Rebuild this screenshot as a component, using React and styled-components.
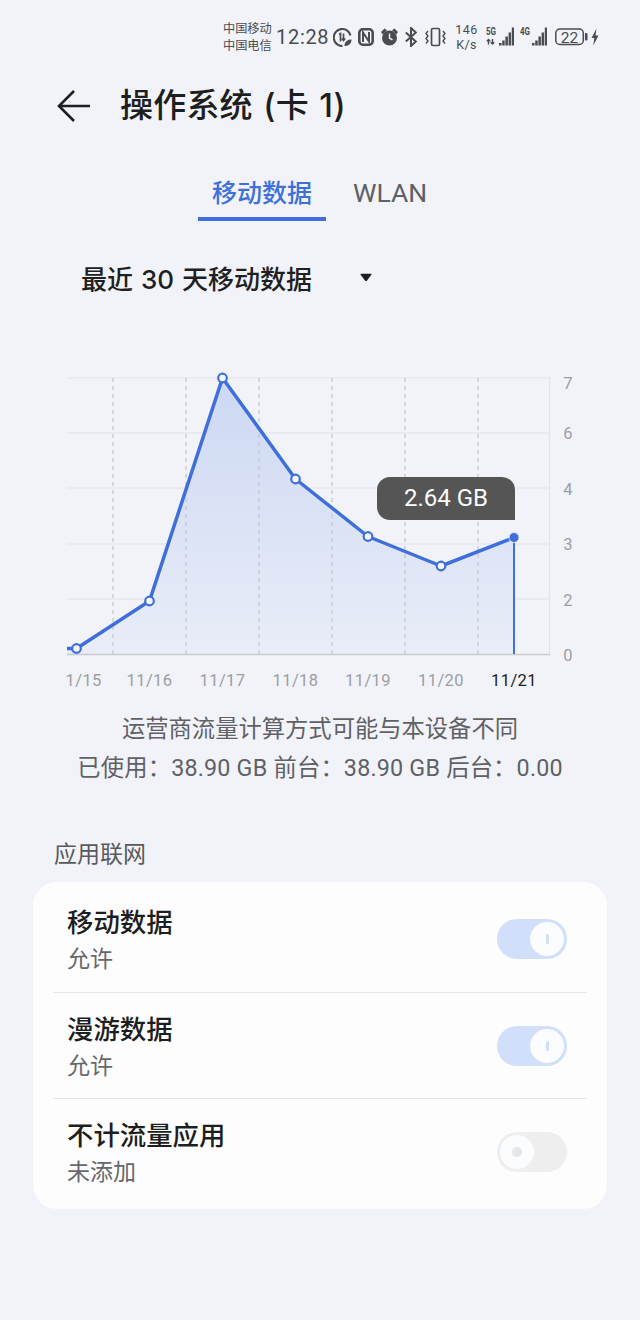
import styled, { createGlobalStyle } from "styled-components";

const CJK = `Inter, "Noto Sans CJK SC", sans-serif`;
const LATIN_FIRST = `Roboto, "Noto Sans CJK SC", sans-serif`;
const INK = "#4a4c50";

const GlobalStyle = createGlobalStyle`
  html, body {
    margin: 0;
    padding: 0;
    background: #f1f3f8;
  }
  body {
    font-family: ${CJK};
  }
`;

const points = [
  [76.5, 648.5],
  [149.5, 601],
  [222.5, 378],
  [295.5, 479],
  [368, 536.5],
  [441, 566],
  [514, 537.5],
];
const gridY = [378, 433, 488, 544, 599];
const gridX = [113, 186, 259, 332, 405, 478];
const axisLabels = [
  ["7", 383],
  ["6", 433],
  ["4", 489],
  ["3", 544],
  ["2", 600],
  ["0", 655],
];
const dayLabels = ["11/16", "11/17", "11/18", "11/19", "11/20", "11/21"];

const rows = [
  { title: "移动数据", sub: "允许", on: true, height: 111, pad: 22 },
  { title: "漫游数据", sub: "允许", on: true, height: 106, pad: 18 },
  { title: "不计流量应用", sub: "未添加", on: false, height: 110, pad: 18 },
];

const Page = styled.div`
  width: 640px;
  height: 1320px;
  overflow: hidden;
  background: #f1f3f8;
`;

const StatusBar = styled.div`
  height: 74px;
  box-sizing: border-box;
  padding: 0 40px 0 223px;
  display: flex;
  align-items: center;
  color: ${INK};
`;

const Carrier = styled.div`
  width: 53px;
  font-size: 12.2px;
  line-height: 17.5px;
`;

const Time = styled.div`
  width: 57px;
  font-family: Roboto, sans-serif;
  font-size: 20px;
  letter-spacing: 0.7px;
`;

const Speed = styled.div`
  width: 23px;
  margin: 0 8px 0 9px;
  font-family: Roboto, sans-serif;
  font-size: 12.5px;
  line-height: 15px;
  letter-spacing: 0.4px;
  text-align: center;
`;

const StatusIcon = styled.svg`
  flex: none;
  margin-right: ${(p) => p.$gap || 0}px;
  display: block;
`;

const Header = styled.div`
  height: 64px;
  display: flex;
  align-items: center;
  gap: 29px;
  padding-left: 57px;
`;

const Title = styled.h1`
  margin: 0;
  padding-bottom: 6px;
  font-size: 33px;
  font-weight: 500;
  word-spacing: 1.5px;
  letter-spacing: 0.2px;
  color: #1d1e20;
  white-space: nowrap;
`;

const Tabs = styled.div`
  margin-top: 21px;
  padding-left: 198px;
  display: flex;
  gap: 27px;
`;

const Tab = styled.div`
  box-sizing: border-box;
  height: 62px;
  padding: 16px ${(p) => (p.$active ? 14 : 0)}px 0;
  width: ${(p) => (p.$active ? "128px" : "auto")};
  font-size: ${(p) => (p.$active ? 25 : 26.5)}px;
  line-height: 36px;
  font-weight: ${(p) => (p.$active ? 500 : 400)};
  color: ${(p) => (p.$active ? "#3f6fdb" : "#5e6064")};
  border-bottom: ${(p) => (p.$active ? "4px solid #3f6fdb" : "none")};
  white-space: nowrap;
  font-family: ${(p) => (p.$active ? CJK : "Roboto, sans-serif")};
`;

const RangeRow = styled.div`
  margin-top: 36px;
  padding-left: 81px;
  display: flex;
  align-items: center;
  height: 40px;
`;

const RangeLabel = styled.div`
  width: 279px;
  font-size: 26px;
  font-weight: 500;
  word-spacing: 1px;
  color: #1f2022;
  white-space: nowrap;
`;

const ChartWrap = styled.div`
  position: relative;
  margin: 63px 0 0 65px;
  width: 575px;
  height: 330px;
`;

const ChartSvg = styled.svg`
  display: block;
`;

const Bubble = styled.div`
  position: absolute;
  left: 312px;
  top: 117px;
  width: 138px;
  height: 43px;
  background: #555555;
  border-radius: 13px 13px 0 13px;
  color: #fbfbfb;
  font-family: Roboto, sans-serif;
  font-size: 24px;
  line-height: 43px;
  text-align: center;
`;

const Note = styled.div`
  margin-top: ${(p) => p.$top || 0}px;
  text-align: center;
  font-family: ${LATIN_FIRST};
  font-size: 23.3px;
  line-height: 38px;
  letter-spacing: ${(p) => p.$spread || 0}px;
  color: #5f6165;
  white-space: nowrap;
`;

const SectionLabel = styled.div`
  margin-top: 49px;
  padding-left: 54px;
  font-size: 23px;
  line-height: 36px;
  color: #585a5e;
`;

const Card = styled.div`
  margin: 10px 33px 0;
  background: #fdfdfe;
  border-radius: 24px;
  padding: 0 20px;
`;

const Row = styled.div`
  box-sizing: border-box;
  height: ${(p) => p.$height}px;
  padding: ${(p) => p.$pad}px 20px 0 14px;
  display: flex;
  justify-content: space-between;
  border-bottom: ${(p) => (p.$last ? "none" : "1px solid #e6e7ea")};
`;

const RowTitle = styled.div`
  font-size: 26.4px;
  line-height: 36px;
  font-weight: 500;
  color: #1d1e20;
`;

const RowSub = styled.div`
  margin-top: 1px;
  font-size: 23px;
  line-height: 36px;
  color: #66686c;
`;

const Toggle = styled.div`
  position: relative;
  margin-top: 15px;
  width: 70px;
  height: 40px;
  border-radius: 20px;
  background: ${(p) => (p.$on ? "#d2dffa" : "#eeeeee")};
`;

const Knob = styled.div`
  position: absolute;
  top: 3px;
  left: ${(p) => (p.$on ? "33px" : "3px")};
  width: 34px;
  height: 34px;
  border-radius: 50%;
  background: #fbfcfe;
  display: flex;
  align-items: center;
  justify-content: center;
  &::after {
    content: "";
    display: block;
    width: ${(p) => (p.$on ? "3px" : "10px")};
    height: 10px;
    border-radius: ${(p) => (p.$on ? "2px" : "50%")};
    background: ${(p) => (p.$on ? "#d2dffa" : "#e6e6e6")};
  }
`;

const BackIcon = () => (
  <svg width="34" height="34" viewBox="0 0 34 34" fill="none" stroke="#1d1e20" strokeWidth="2.6">
    <path d="M33 17H2.5M17 2L2 17l15 15" />
  </svg>
);

const Caret = () => (
  <svg width="12" height="9" viewBox="0 0 14 10" fill="#1d1e20">
    <path d="M1.5 0.5h11q1.5 0 .8 1.4L8 8.8q-1 1-2 0L.7 1.9Q0 .5 1.5.5z" />
  </svg>
);

const NetIcon = ({ label, arrows, width }) => (
  <StatusIcon $gap={arrows ? 6 : 8} width={width} height="20" viewBox={`0 0 ${width} 20`}>
    <text
      x="0"
      y="8"
      fontFamily="Roboto, sans-serif"
      fontSize="10"
      fontWeight="700"
      textLength="10"
      lengthAdjust="spacingAndGlyphs"
      fill={INK}
    >
      {label}
    </text>
    {arrows && (
      <path d="M2.500 17.500v-5M.8 14.200l1.700-1.700 1.700 1.700M6.500 12v5M4.800 15.300l1.700 1.700 1.700-1.700" fill="none" stroke={INK} strokeWidth="1.400" />
    )}
    <g fill={INK}>
      {[2.5, 5, 9, 13, 18].map((h, i) => (
        <rect key={i} x={width - 15 + i * 3.2} y={18.5 - h} width="2.500" height={h} />
      ))}
    </g>
  </StatusIcon>
);

const StatusIcons = () => (
  <>
    <StatusIcon $gap={6} width="19" height="19" viewBox="0 0 19 19" fill="none" stroke={INK} strokeWidth="2.100">
      <path d="M17.500 7.500A8.500 8.500 0 1 0 9.500 18" />
      <path d="M6 6.500l1.500-1v8M10.500 5.500v7M8.800 10.500l1.700 2 1.700-2" strokeWidth="1.700" />
      <path d="M11.500 18c0-4 2.500-6.500 7-6.500 0 4-2.500 6.500-7 6.500z" fill={INK} stroke="none" />
    </StatusIcon>
    <StatusIcon $gap={7} width="16" height="18" viewBox="0 0 16 18" fill="none" stroke={INK}>
      <rect x="1.300" y="1.300" width="13.400" height="15.400" rx="3.500" strokeWidth="2.600" />
      <path d="M5 14V4.500l6 9V4" strokeWidth="2" />
    </StatusIcon>
    <StatusIcon $gap={7} width="17" height="18" viewBox="0 0 17 18" fill={INK}>
      <circle cx="8.500" cy="10" r="7.500" />
      <path d="M0 4L3.500.5 6 2.200 1.700 6.500zM17 4L13.500.5 11 2.200l4.300 4.300z" />
      <path d="M8.500 5.500V10l3 1.800" fill="none" stroke="#f1f3f8" strokeWidth="1.400" />
    </StatusIcon>
    <StatusIcon $gap={8} width="12" height="20" viewBox="0 0 12 20" fill="none" stroke={INK} strokeWidth="2">
      <path d="M.8 5.500l10 9L6 19V1l4.800 4.500-10 9" />
    </StatusIcon>
    <StatusIcon $gap={0} width="21" height="20" viewBox="0 0 21 20" fill="none" stroke={INK} strokeWidth="1.700">
      <rect x="6.500" y="1.500" width="8" height="17" rx="1.500" />
      <path d="M3 4L1 6.500 3 9 1 11.500 3 14 1 16.500M18 4l2 2.500L18 9l2 2.500L18 14l2 2.500" strokeWidth="1.400" />
    </StatusIcon>
    <Speed>
      146
      <br />
      K/s
    </Speed>
    <NetIcon label="5G" arrows width={28} />
    <NetIcon label="4G" width={27} />
    <StatusIcon $gap={0} width="44" height="20" viewBox="0 0 44 20" fill="none">
      <rect x="0.800" y="2" width="27.500" height="15.500" rx="4" stroke={INK} strokeWidth="1.500" />
      <text x="14.500" y="15.500" textAnchor="middle" fontFamily="Roboto, sans-serif" fontSize="15.500" fill={INK}>22</text>
      <rect x="30" y="6" width="2.500" height="7.500" rx="1" fill={INK} />
      <path d="M41.500 1.500L36.500 11h2.800l-1 7.500 5.200-10h-3z" fill={INK} />
    </StatusIcon>
  </>
);

const Chart = () => {
  const line = points.map((p) => p.join(",")).join(" ");
  return (
    <ChartWrap>
      <ChartSvg width="575" height="330" viewBox="65 360 575 330" fill="none">
        <defs>
          <linearGradient id="area" x1="0" y1="0" x2="0" y2="1">
            <stop offset="0" stopColor="#ccd8f3" />
            <stop offset="1" stopColor="#e9edf8" />
          </linearGradient>
        </defs>
        {gridY.map((y) => (
          <line key={y} x1="67" x2="550" y1={y} y2={y} stroke="#e3e4e8" strokeWidth="1.200" />
        ))}
        <line x1="549.500" x2="549.500" y1="378" y2="654" stroke="#e3e4e8" strokeWidth="1.200" />
        <polygon points={`67,654 67,648.5 ${line} 514,654`} fill="url(#area)" />
        {gridX.map((x) => (
          <line key={x} x1={x} x2={x} y1="378" y2="654" stroke="#c6c8cf" strokeWidth="1.300" strokeDasharray="4 4" />
        ))}
        <line x1="67" x2="550" y1="654.500" y2="654.500" stroke="#c9cbd0" strokeWidth="1.300" />
        <line x1="514" x2="514" y1="537" y2="654" stroke="#3f6fdb" strokeWidth="2" />
        <polyline points={`67,648.500 ${line}`} stroke="#3f6fdb" strokeWidth="3.500" strokeLinejoin="round" />
        {points.slice(0, -1).map(([x, y]) => (
          <circle key={x} cx={x} cy={y} r="4.300" fill="#f6f7fb" stroke="#3f6fdb" strokeWidth="2.200" />
        ))}
        <circle cx="514" cy="537.500" r="5" fill="#3f6fdb" stroke="#f1f3f8" strokeWidth="0.800" />
        {axisLabels.map(([label, y]) => (
          <text key={label} x="568" y={y + 6} textAnchor="middle" fontFamily="Roboto, sans-serif" fontSize="16.500" fill="#9c9ea3">
            {label}
          </text>
        ))}
        <text x="65.500" y="686" fontFamily="Roboto, sans-serif" fontSize="16.500" letterSpacing="0.4" fill="#9c9ea3">
          1/15
        </text>
        {dayLabels.map((label, i) => (
          <text
            key={label}
            x={points[i + 1][0]}
            y="686"
            textAnchor="middle"
            fontFamily="Roboto, sans-serif"
            fontSize="16.500"
            letterSpacing="0.4"
            fill={i === 5 ? "#1d1e20" : "#9c9ea3"}
          >
            {label}
          </text>
        ))}
      </ChartSvg>
      <Bubble>2.64 GB</Bubble>
    </ChartWrap>
  );
};

export default function App() {
  return (
    <Page>
      <GlobalStyle />
      <StatusBar>
        <Carrier>
          中国移动
          <br />
          中国电信
        </Carrier>
        <Time>12:28</Time>
        <StatusIcons />
      </StatusBar>
      <Header>
        <BackIcon />
        <Title>操作系统 (卡 1)</Title>
      </Header>
      <Tabs>
        <Tab $active>移动数据</Tab>
        <Tab>WLAN</Tab>
      </Tabs>
      <RangeRow>
        <RangeLabel>最近 30 天移动数据</RangeLabel>
        <Caret />
      </RangeRow>
      <Chart />
      <Note $top={20}>运营商流量计算方式可能与本设备不同</Note>
      <Note $top={1} $spread={0.2}>已使用：38.90 GB 前台：38.90 GB 后台：0.00</Note>
      <SectionLabel>应用联网</SectionLabel>
      <Card>
        {rows.map((row, i) => (
          <Row key={row.title} $height={row.height} $pad={row.pad} $last={i === rows.length - 1}>
            <div>
              <RowTitle>{row.title}</RowTitle>
              <RowSub>{row.sub}</RowSub>
            </div>
            <Toggle $on={row.on}>
              <Knob $on={row.on} />
            </Toggle>
          </Row>
        ))}
      </Card>
    </Page>
  );
}
